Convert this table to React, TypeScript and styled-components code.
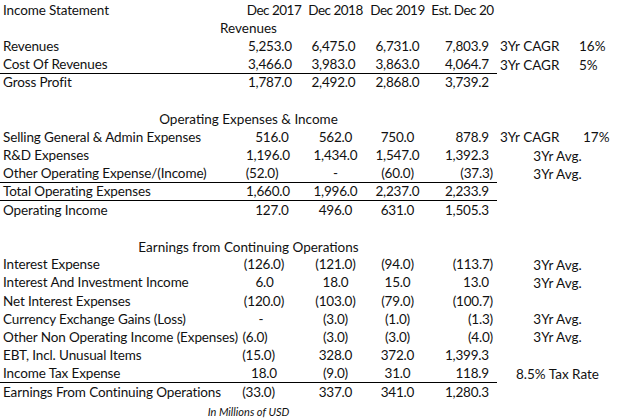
import React from "react";
import styled, { createGlobalStyle } from "styled-components";

const GlobalStyle = createGlobalStyle`
  html, body { margin: 0; padding: 0; background: #ffffff; }
  body { font-family: Lato, "Open Sans", sans-serif; color: #000000; }
`;

const COLS = "244px 60px 63px 61px 69px 69px 58px";

const Sheet = styled.div`
  width: 624px;
  height: 420px;
  box-sizing: border-box;
  padding-top: 1px;
  font-family: Lato, "Open Sans", sans-serif;
  font-size: 13.5px;
  color: #111111;
  overflow: hidden;
`;

const Row = styled.div`
  display: grid;
  grid-template-columns: ${COLS};
  height: 18.2px;
  align-items: stretch;
`;

const Cell = styled.div<{ $rule?: boolean }>`
  display: flex;
  align-items: center;
  white-space: nowrap;
  box-sizing: border-box;
  border-bottom: ${(p) => (p.$rule ? "1.6px solid #000" : "1.6px solid transparent")};
`;

const Label = styled(Cell)`
  padding-left: 3px;
  letter-spacing: -0.12px;
`;

const Num = styled(Cell)<{ $shift?: number }>`
  justify-content: center;
  letter-spacing: -0.2px;
  padding-right: ${(p) => p.$shift ?? 0}px;
`;

const Est = styled(Cell)<{ $neg?: boolean }>`
  justify-content: flex-end;
  letter-spacing: -0.2px;
  padding-right: ${(p) => (p.$neg ? "4px" : "8px")};
`;

const Head = styled(Cell)`
  justify-content: center;
  letter-spacing: -0.5px;
`;

const Section = styled.div`
  grid-column: 1 / 6;
  display: flex;
  align-items: center;
  justify-content: center;
`;

const Note = styled.div<{ $pad?: number }>`
  display: flex;
  align-items: center;
  padding-left: ${(p) => p.$pad ?? 3}px;
  white-space: nowrap;
`;

const Pct = styled.div<{ $pad?: number }>`
  display: flex;
  align-items: center;
  padding-left: ${(p) => p.$pad ?? 13}px;
  white-space: nowrap;
`;

const WideNote = styled.div`
  grid-column: 6 / 8;
  display: flex;
  align-items: center;
  justify-content: center;
  padding-right: 6px;
  white-space: nowrap;
`;

const Footnote = styled.div`
  grid-column: 1 / 6;
  display: flex;
  align-items: center;
  justify-content: center;
  font-style: italic;
  font-size: 11px;
  padding-top: 3px;
`;

type DataRow =
  | { kind: "blank" }
  | { kind: "section"; text: string }
  | {
      kind: "data";
      label: string;
      vals: [string, string, string, string];
      s0?: number;
      s1?: number;
      rule?: boolean;
      cagr?: string;
      pctPad?: number;
      wide?: string;
    };

const rows: DataRow[] = [
  { kind: "section", text: "Revenues" },
  { kind: "data", label: "Revenues", vals: ["5,253.0", "6,475.0", "6,731.0", "7,803.9"], s0: 8, s1: 4, cagr: "16%" },
  { kind: "data", label: "Cost Of Revenues", vals: ["3,466.0", "3,983.0", "3,863.0", "4,064.7"], s0: 8, s1: 4, cagr: "5%", rule: true },
  { kind: "data", label: "Gross Profit", vals: ["1,787.0", "2,492.0", "2,868.0", "3,739.2"], s0: 8, s1: 4 },
  { kind: "blank" },
  { kind: "section", text: "Operating Expenses & Income" },
  { kind: "data", label: "Selling General & Admin Expenses", vals: ["516.0", "562.0", "750.0", "878.9"], s0: 4, cagr: "17%", pctPad: 17 },
  { kind: "data", label: "R&D Expenses", vals: ["1,196.0", "1,434.0", "1,547.0", "1,392.3"], s0: 12, wide: "3Yr Avg." },
  { kind: "data", label: "Other Operating Expense/(Income)", vals: ["(52.0)", "-", "(60.0)", "(37.3)"], s0: 24, wide: "3Yr Avg.", rule: true },
  { kind: "data", label: "Total Operating Expenses", vals: ["1,660.0", "1,996.0", "2,237.0", "2,233.9"], s0: 12, rule: true },
  { kind: "data", label: "Operating Income", vals: ["127.0", "496.0", "631.0", "1,505.3"], s0: 4 },
  { kind: "blank" },
  { kind: "section", text: "Earnings from Continuing Operations" },
  { kind: "data", label: "Interest Expense", vals: ["(126.0)", "(121.0)", "(94.0)", "(113.7)"], s0: 20, wide: "3Yr Avg." },
  { kind: "data", label: "Interest And Investment Income", vals: ["6.0", "18.0", "15.0", "13.0"], s0: 19, wide: "3Yr Avg." },
  { kind: "data", label: "Net Interest Expenses", vals: ["(120.0)", "(103.0)", "(79.0)", "(100.7)"], s0: 20 },
  { kind: "data", label: "Currency Exchange Gains (Loss)", vals: ["-", "(3.0)", "(1.0)", "(1.3)"], s0: 26, wide: "3Yr Avg." },
  { kind: "data", label: "Other Non Operating Income (Expenses)", vals: ["(6.0)", "(3.0)", "(3.0)", "(4.0)"], s0: 38, wide: "3Yr Avg." },
  { kind: "data", label: "EBT, Incl. Unusual Items", vals: ["(15.0)", "328.0", "372.0", "1,399.3"], s0: 31 },
  { kind: "data", label: "Income Tax Expense", vals: ["18.0", "(9.0)", "31.0", "118.9"], s0: 20, wide: "8.5% Tax Rate", rule: true },
  { kind: "data", label: "Earnings From Continuing Operations", vals: ["(33.0)", "337.0", "341.0", "1,280.3"], s0: 31 },
];

export default function App() {
  return (
    <>
      <GlobalStyle />
      <Sheet>
        <Row>
          <Label>Income Statement</Label>
          <Head>Dec 2017</Head>
          <Head>Dec 2018</Head>
          <Head>Dec 2019</Head>
          <Head>Est. Dec 20</Head>
        </Row>
        {rows.map((r, i) => {
          if (r.kind === "blank") return <Row key={i} />;
          if (r.kind === "section")
            return (
              <Row key={i}>
                <Section>{r.text}</Section>
              </Row>
            );
          const est = r.vals[3];
          return (
            <Row key={i}>
              <Label $rule={r.rule}>{r.label}</Label>
              <Num $rule={r.rule} $shift={r.s0}>{r.vals[0]}</Num>
              <Num $rule={r.rule} $shift={r.s1}>{r.vals[1]}</Num>
              <Num $rule={r.rule}>{r.vals[2]}</Num>
              <Est $rule={r.rule} $neg={est.startsWith("(")}>
                {est}
              </Est>
              {r.cagr && (
                <>
                  <Note>3Yr CAGR</Note>
                  <Pct $pad={r.pctPad}>{r.cagr}</Pct>
                </>
              )}
              {r.wide && <WideNote>{r.wide}</WideNote>}
            </Row>
          );
        })}
        <Row>
          <Footnote>In Millions of USD</Footnote>
        </Row>
      </Sheet>
    </>
  );
}
